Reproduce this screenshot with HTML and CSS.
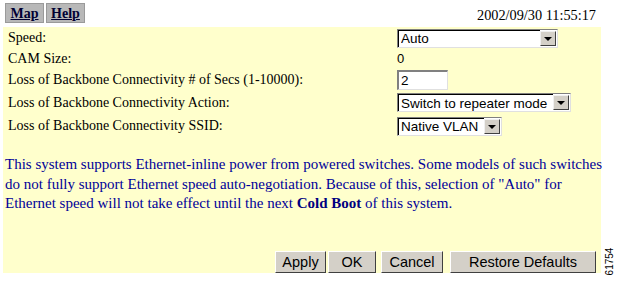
FILE: index.html
```html
<!DOCTYPE html>
<html>
<head>
<meta charset="utf-8">
<link rel="stylesheet" href="styles.css">
</head>
<body>
<div class="top">
  <div class="nav">
    <a class="navbtn" href="#">Map</a>
    <a class="navbtn" href="#">Help</a>
  </div>
  <div class="date">2002/09/30 11:55:17</div>
</div>
<div class="panel">
  <table class="form">
    <tr class="r1">
      <td class="label">Speed:</td>
      <td class="ctl">
        <span class="sel w160"><select class="selbox"><option>Auto</option></select><span class="arrow"></span></span>
      </td>
    </tr>
    <tr class="r2">
      <td class="label">CAM Size:</td>
      <td class="ctl"><span class="val">0</span></td>
    </tr>
    <tr class="r3">
      <td class="label">Loss of Backbone Connectivity # of Secs (1-10000):</td>
      <td class="ctl"><input class="txt" type="text" value="2"></td>
    </tr>
    <tr class="r4">
      <td class="label">Loss of Backbone Connectivity Action:</td>
      <td class="ctl">
        <span class="sel"><select class="selbox padr"><option>Switch to repeater mode</option></select><span class="arrow"></span></span>
      </td>
    </tr>
    <tr class="r5">
      <td class="label">Loss of Backbone Connectivity SSID:</td>
      <td class="ctl">
        <span class="sel"><select class="selbox padr"><option>Native VLAN</option></select><span class="arrow"></span></span>
      </td>
    </tr>
  </table>
  <p class="note">This system supports Ethernet-inline power from powered switches. Some models of such switches do not fully support Ethernet speed auto-negotiation. Because of this, selection of "Auto" for Ethernet speed will not take effect until the next <b>Cold Boot</b> of this system.</p>
  <div class="actions">
    <button class="btn b-apply">Apply</button>
    <button class="btn b-ok">OK</button>
    <button class="btn b-cancel">Cancel</button>
    <button class="btn b-restore">Restore Defaults</button>
  </div>
</div>
<div class="figno">61754</div>
</body>
</html>
```
FILE: styles.css
```css
html, body {
  margin: 0;
  padding: 0;
  background: #ffffff;
}
body {
  width: 618px;
  height: 283px;
  position: relative;
  font-family: "Liberation Serif", "Times New Roman", serif;
  color: #000;
  overflow: hidden;
}
.top {
  height: 27px;
  display: flex;
  justify-content: space-between;
  align-items: flex-start;
}
.nav {
  display: flex;
  gap: 2px;
  padding: 3px 0 0 5px;
}
.navbtn {
  display: block;
  width: 37px;
  height: 18px;
  background: #b8b8b8;
  border: 1px solid #9a9a9a;
  font-family: "Liberation Serif", serif;
  font-weight: bold;
  font-size: 14px;
  color: #000033;
  text-align: center;
  line-height: 19px;
  text-decoration: underline;
}
.date {
  font-size: 14.3px;
  padding: 8px 22px 0 0;
  line-height: 15px;
}
.panel {
  margin-left: 3px;
  width: 598px;
  height: 246px;
  background: #ffffcc;
  display: flex;
  flex-direction: column;
}
.form {
  border-collapse: collapse;
  width: 598px;
}
.form td {
  padding: 0;
  font-size: 14px;
  vertical-align: middle;
}
.label {
  padding-left: 5px !important;
  width: 389px;
}
.r1 { height: 22px; }
.r2 { height: 20px; }
.r3 { height: 21px; }
.r4 { height: 25px; }
.r5 { height: 22px; }
.val {
  font-family: "Liberation Sans", Arial, sans-serif;
  font-size: 13px;
}
.sel {
  display: inline-flex;
  height: 19px;
  box-sizing: border-box;
  border-top: 1px solid #808080;
  border-left: 1px solid #808080;
  border-right: 1px solid #e0e0e0;
  border-bottom: 1px solid #e0e0e0;
  background: #fff;
  vertical-align: middle;
}
.w160 { width: 161px; }
.selbox {
  appearance: none;
  -webkit-appearance: none;
  border: none;
  border-top: 1px solid #000;
  border-left: 1px solid #000;
  background: #fff;
  font-family: "Liberation Sans", Arial, sans-serif;
  font-size: 13.5px;
  color: #000;
  padding: 0 2px 0 2px;
  margin: 0;
  height: 17px;
  line-height: 15px;
  flex: 1;
  outline: none;
}
.padr { padding-right: 5px; }
.arrow {
  width: 16px;
  height: 15px;
  margin: 1px 1px 1px 0;
  box-sizing: border-box;
  background: #d4d0c8;
  border-top: 1px solid #f0f0f0;
  border-left: 1px solid #f0f0f0;
  border-right: 1px solid #404040;
  border-bottom: 1px solid #404040;
  position: relative;
}
.arrow::after {
  content: "";
  position: absolute;
  left: 3px;
  top: 5px;
  border-left: 4px solid transparent;
  border-right: 4px solid transparent;
  border-top: 4px solid #000;
}
.txt {
  width: 51px;
  height: 20px;
  box-sizing: border-box;
  border-top: 2px solid #808080;
  border-left: 2px solid #808080;
  border-right: 1px solid #e0e0e0;
  border-bottom: 1px solid #e0e0e0;
  font-family: "Liberation Sans", Arial, sans-serif;
  font-size: 13.5px;
  padding: 0 2px;
  margin: 0;
  vertical-align: middle;
}
.note {
  margin: 0 -8px 0 0;
  padding: 18px 0 0 2px;
  font-size: 15px;
  line-height: 19.5px;
  color: #000099;
}
.note b { color: #000080; }
.actions {
  margin-top: auto;
  padding-left: 272px;
  display: flex;
  gap: 2px;
}
.btn {
  flex-shrink: 0;
  height: 22px;
  box-sizing: border-box;
  background: #d4d0c8;
  border-top: 1px solid #ffffff;
  border-left: 1px solid #ffffff;
  border-right: 1px solid #404040;
  border-bottom: 1px solid #404040;
  font-family: "Liberation Sans", Arial, sans-serif;
  font-size: 14.5px;
  color: #000;
  padding: 0;
  margin: 0;
}
.b-apply { width: 51px; }
.b-ok { width: 48px; }
.b-cancel { width: 62px; margin-left: 3px; }
.b-restore { width: 146px; margin-left: 5px; }
.figno {
  position: absolute;
  left: 595px;
  top: 256px;
  width: 28px;
  text-align: center;
  line-height: 11px;
  font-family: "Liberation Sans", Arial, sans-serif;
  font-size: 10px;
  transform: rotate(-90deg);
}
```
